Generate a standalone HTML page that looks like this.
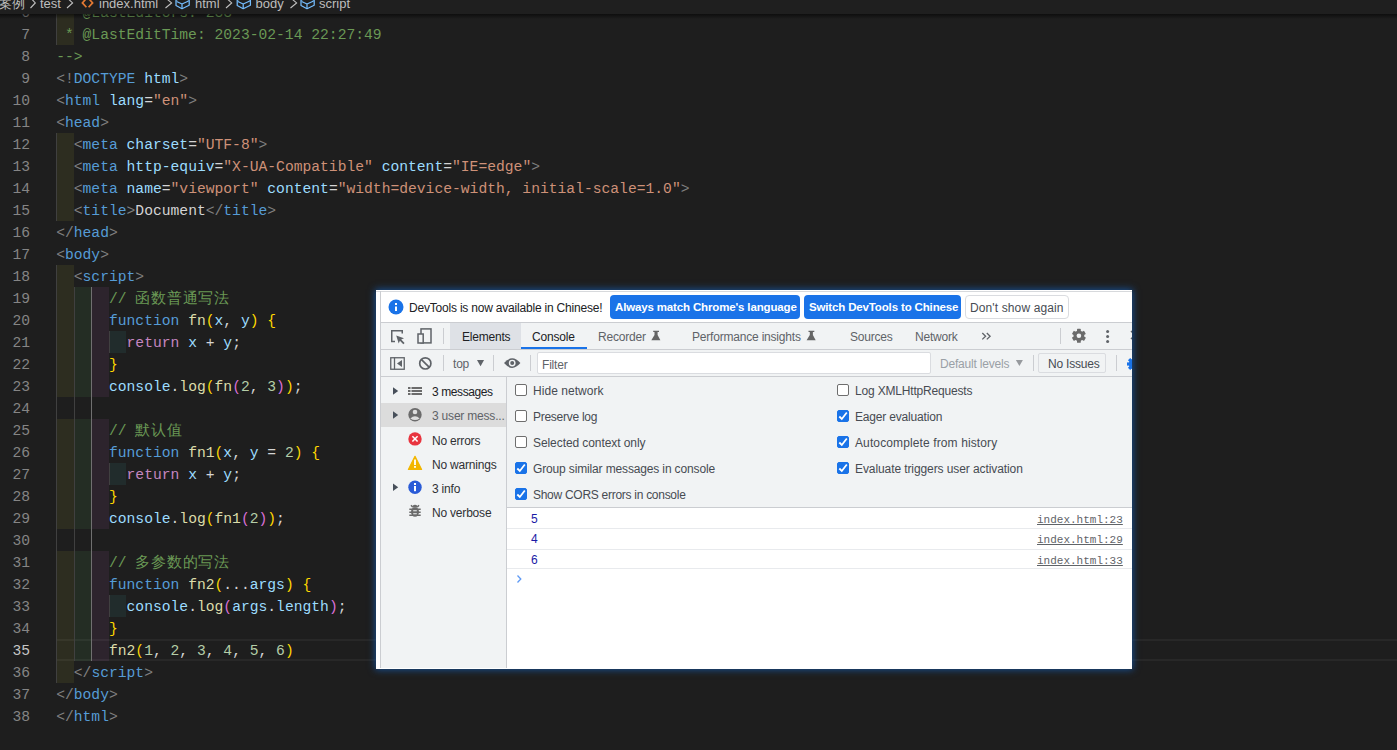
<!DOCTYPE html>
<html><head><meta charset="utf-8">
<style>
*{box-sizing:border-box;margin:0;padding:0}
html,body{width:1397px;height:750px;overflow:hidden;background:#1e1e1e}
body{position:relative;font-family:"Liberation Sans",sans-serif}
#ed{position:absolute;left:0;top:0;width:1397px;height:750px;overflow:hidden}
.cur{position:absolute;left:56px;right:0;height:22px;border-top:2px solid #282828;border-bottom:2px solid #282828}
.band{position:absolute;height:22px}
.guide{position:absolute;width:1px}
.ln{position:absolute;left:0;width:30px;text-align:right;height:22px;line-height:22px;font-family:"Liberation Mono",monospace;font-size:14.667px;color:#858585;white-space:pre}
.ln.act{color:#c6c6c6}
.code{position:absolute;left:56.2px;height:22px;line-height:22px;font-family:"Liberation Mono",monospace;font-size:14.667px;white-space:pre;color:#d4d4d4}
.cm{color:#6a9955}
.pu{color:#808080}
.tg{color:#569cd6}
.at{color:#9cdcfe}
.st{color:#ce9178}
.tx{color:#d4d4d4}
.kw{color:#569cd6}
.rt{color:#c586c0}
.va{color:#9cdcfe}
.fn{color:#dcdcaa}
.nu{color:#b5cea8}
.b1{color:#ffd700}
.b2{color:#da70d6}
#bc{position:absolute;left:0;top:0;width:1397px;height:14px;background:#1f1f1f;overflow:hidden;font-size:13px;color:#bdbdbd;white-space:nowrap}
#bc span{position:absolute;top:-4.5px;line-height:16px}
/* devtools */
#dt{position:absolute;left:376px;top:290px;width:756px;height:379px;background:#fff;overflow:hidden;box-shadow:0 0 7px 1px rgba(22,80,150,.95);font-size:12px;color:#202124;letter-spacing:-0.2px}
#dt .a{position:absolute;white-space:nowrap}
.hl{position:absolute;height:1px;background:#cbcdd1}
.vl{position:absolute;width:1px;background:#cbcdd1}
.btn{position:absolute;height:24px;border-radius:4px;background:#1a73e8;color:#fff;font-weight:bold;font-size:11.5px;letter-spacing:-0.15px;line-height:24px;padding-left:5px;white-space:nowrap}
.cb{position:absolute;width:12px;height:12px;border:1px solid #6e6e6e;border-radius:2px;background:#fff}
.cb.on{background:#1a73e8;border-color:#1a73e8}
.link{position:absolute;font-family:"Liberation Mono",monospace;font-size:11px;letter-spacing:0;color:#5f6368;text-decoration:underline;white-space:nowrap}
</style></head><body>
<div id="ed">
<div class="cur" style="top:639px"></div>
<div class="band" style="left:56.00px;top:1px;width:17.60px;background:rgba(255,255,64,0.07)"></div>
<div class="band" style="left:56.00px;top:23px;width:17.60px;background:rgba(255,255,64,0.07)"></div>
<div class="band" style="left:56.00px;top:133px;width:17.60px;background:rgba(255,255,64,0.07)"></div>
<div class="band" style="left:56.00px;top:155px;width:17.60px;background:rgba(255,255,64,0.07)"></div>
<div class="band" style="left:56.00px;top:177px;width:17.60px;background:rgba(255,255,64,0.07)"></div>
<div class="band" style="left:56.00px;top:199px;width:17.60px;background:rgba(255,255,64,0.07)"></div>
<div class="band" style="left:56.00px;top:265px;width:17.60px;background:rgba(255,255,64,0.07)"></div>
<div class="band" style="left:56.00px;top:661px;width:17.60px;background:rgba(255,255,64,0.07)"></div>
<div class="band" style="left:56.00px;top:287px;width:17.60px;background:rgba(255,255,64,0.07)"></div>
<div class="band" style="left:73.60px;top:287px;width:17.60px;background:rgba(127,255,127,0.07)"></div>
<div class="band" style="left:91.20px;top:287px;width:17.60px;background:rgba(255,127,255,0.07)"></div>
<div class="band" style="left:56.00px;top:309px;width:17.60px;background:rgba(255,255,64,0.07)"></div>
<div class="band" style="left:73.60px;top:309px;width:17.60px;background:rgba(127,255,127,0.07)"></div>
<div class="band" style="left:91.20px;top:309px;width:17.60px;background:rgba(255,127,255,0.07)"></div>
<div class="band" style="left:56.00px;top:353px;width:17.60px;background:rgba(255,255,64,0.07)"></div>
<div class="band" style="left:73.60px;top:353px;width:17.60px;background:rgba(127,255,127,0.07)"></div>
<div class="band" style="left:91.20px;top:353px;width:17.60px;background:rgba(255,127,255,0.07)"></div>
<div class="band" style="left:56.00px;top:375px;width:17.60px;background:rgba(255,255,64,0.07)"></div>
<div class="band" style="left:73.60px;top:375px;width:17.60px;background:rgba(127,255,127,0.07)"></div>
<div class="band" style="left:91.20px;top:375px;width:17.60px;background:rgba(255,127,255,0.07)"></div>
<div class="band" style="left:56.00px;top:419px;width:17.60px;background:rgba(255,255,64,0.07)"></div>
<div class="band" style="left:73.60px;top:419px;width:17.60px;background:rgba(127,255,127,0.07)"></div>
<div class="band" style="left:91.20px;top:419px;width:17.60px;background:rgba(255,127,255,0.07)"></div>
<div class="band" style="left:56.00px;top:441px;width:17.60px;background:rgba(255,255,64,0.07)"></div>
<div class="band" style="left:73.60px;top:441px;width:17.60px;background:rgba(127,255,127,0.07)"></div>
<div class="band" style="left:91.20px;top:441px;width:17.60px;background:rgba(255,127,255,0.07)"></div>
<div class="band" style="left:56.00px;top:485px;width:17.60px;background:rgba(255,255,64,0.07)"></div>
<div class="band" style="left:73.60px;top:485px;width:17.60px;background:rgba(127,255,127,0.07)"></div>
<div class="band" style="left:91.20px;top:485px;width:17.60px;background:rgba(255,127,255,0.07)"></div>
<div class="band" style="left:56.00px;top:507px;width:17.60px;background:rgba(255,255,64,0.07)"></div>
<div class="band" style="left:73.60px;top:507px;width:17.60px;background:rgba(127,255,127,0.07)"></div>
<div class="band" style="left:91.20px;top:507px;width:17.60px;background:rgba(255,127,255,0.07)"></div>
<div class="band" style="left:56.00px;top:551px;width:17.60px;background:rgba(255,255,64,0.07)"></div>
<div class="band" style="left:73.60px;top:551px;width:17.60px;background:rgba(127,255,127,0.07)"></div>
<div class="band" style="left:91.20px;top:551px;width:17.60px;background:rgba(255,127,255,0.07)"></div>
<div class="band" style="left:56.00px;top:573px;width:17.60px;background:rgba(255,255,64,0.07)"></div>
<div class="band" style="left:73.60px;top:573px;width:17.60px;background:rgba(127,255,127,0.07)"></div>
<div class="band" style="left:91.20px;top:573px;width:17.60px;background:rgba(255,127,255,0.07)"></div>
<div class="band" style="left:56.00px;top:617px;width:17.60px;background:rgba(255,255,64,0.07)"></div>
<div class="band" style="left:73.60px;top:617px;width:17.60px;background:rgba(127,255,127,0.07)"></div>
<div class="band" style="left:91.20px;top:617px;width:17.60px;background:rgba(255,127,255,0.07)"></div>
<div class="band" style="left:56.00px;top:639px;width:17.60px;background:rgba(255,255,64,0.07)"></div>
<div class="band" style="left:73.60px;top:639px;width:17.60px;background:rgba(127,255,127,0.07)"></div>
<div class="band" style="left:91.20px;top:639px;width:17.60px;background:rgba(255,127,255,0.07)"></div>
<div class="band" style="left:56.00px;top:331px;width:17.60px;background:rgba(255,255,64,0.07)"></div>
<div class="band" style="left:73.60px;top:331px;width:17.60px;background:rgba(127,255,127,0.07)"></div>
<div class="band" style="left:91.20px;top:331px;width:17.60px;background:rgba(255,127,255,0.07)"></div>
<div class="band" style="left:108.80px;top:331px;width:17.60px;background:rgba(79,236,236,0.07)"></div>
<div class="band" style="left:56.00px;top:463px;width:17.60px;background:rgba(255,255,64,0.07)"></div>
<div class="band" style="left:73.60px;top:463px;width:17.60px;background:rgba(127,255,127,0.07)"></div>
<div class="band" style="left:91.20px;top:463px;width:17.60px;background:rgba(255,127,255,0.07)"></div>
<div class="band" style="left:108.80px;top:463px;width:17.60px;background:rgba(79,236,236,0.07)"></div>
<div class="band" style="left:56.00px;top:595px;width:17.60px;background:rgba(255,255,64,0.07)"></div>
<div class="band" style="left:73.60px;top:595px;width:17.60px;background:rgba(127,255,127,0.07)"></div>
<div class="band" style="left:91.20px;top:595px;width:17.60px;background:rgba(255,127,255,0.07)"></div>
<div class="band" style="left:108.80px;top:595px;width:17.60px;background:rgba(79,236,236,0.07)"></div>
<div class="guide" style="left:56px;top:1px;height:44px;background:#404040"></div>
<div class="guide" style="left:56px;top:133px;height:88px;background:#404040"></div>
<div class="guide" style="left:56px;top:265px;height:418px;background:#404040"></div>
<div class="guide" style="left:74px;top:287px;height:374px;background:#404040"></div>
<div class="guide" style="left:91px;top:287px;height:374px;background:#707070"></div>
<div class="guide" style="left:109px;top:331px;height:22px;background:#404040"></div>
<div class="guide" style="left:109px;top:463px;height:22px;background:#404040"></div>
<div class="guide" style="left:109px;top:595px;height:22px;background:#404040"></div>
<div class="ln" style="top:2px">6</div>
<div class="code" style="top:2px"><span class="cm"> * @LastEditors: 233</span></div>
<div class="ln" style="top:24px">7</div>
<div class="code" style="top:24px"><span class="cm"> * @LastEditTime: 2023-02-14 22:27:49</span></div>
<div class="ln" style="top:46px">8</div>
<div class="code" style="top:46px"><span class="cm">--&gt;</span></div>
<div class="ln" style="top:68px">9</div>
<div class="code" style="top:68px"><span class="pu">&lt;!</span><span class="tg">DOCTYPE</span><span class="tx"> </span><span class="at">html</span><span class="pu">&gt;</span></div>
<div class="ln" style="top:90px">10</div>
<div class="code" style="top:90px"><span class="pu">&lt;</span><span class="tg">html</span><span class="tx"> </span><span class="at">lang</span><span class="tx">=</span><span class="st">&quot;en&quot;</span><span class="pu">&gt;</span></div>
<div class="ln" style="top:112px">11</div>
<div class="code" style="top:112px"><span class="pu">&lt;</span><span class="tg">head</span><span class="pu">&gt;</span></div>
<div class="ln" style="top:134px">12</div>
<div class="code" style="top:134px"><span class="tx">  </span><span class="pu">&lt;</span><span class="tg">meta</span><span class="tx"> </span><span class="at">charset</span><span class="tx">=</span><span class="st">&quot;UTF-8&quot;</span><span class="pu">&gt;</span></div>
<div class="ln" style="top:156px">13</div>
<div class="code" style="top:156px"><span class="tx">  </span><span class="pu">&lt;</span><span class="tg">meta</span><span class="tx"> </span><span class="at">http-equiv</span><span class="tx">=</span><span class="st">&quot;X-UA-Compatible&quot;</span><span class="tx"> </span><span class="at">content</span><span class="tx">=</span><span class="st">&quot;IE=edge&quot;</span><span class="pu">&gt;</span></div>
<div class="ln" style="top:178px">14</div>
<div class="code" style="top:178px"><span class="tx">  </span><span class="pu">&lt;</span><span class="tg">meta</span><span class="tx"> </span><span class="at">name</span><span class="tx">=</span><span class="st">&quot;viewport&quot;</span><span class="tx"> </span><span class="at">content</span><span class="tx">=</span><span class="st">&quot;width=device-width, initial-scale=1.0&quot;</span><span class="pu">&gt;</span></div>
<div class="ln" style="top:200px">15</div>
<div class="code" style="top:200px"><span class="tx">  </span><span class="pu">&lt;</span><span class="tg">title</span><span class="pu">&gt;</span><span class="tx">Document</span><span class="pu">&lt;/</span><span class="tg">title</span><span class="pu">&gt;</span></div>
<div class="ln" style="top:222px">16</div>
<div class="code" style="top:222px"><span class="pu">&lt;/</span><span class="tg">head</span><span class="pu">&gt;</span></div>
<div class="ln" style="top:244px">17</div>
<div class="code" style="top:244px"><span class="pu">&lt;</span><span class="tg">body</span><span class="pu">&gt;</span></div>
<div class="ln" style="top:266px">18</div>
<div class="code" style="top:266px"><span class="tx">  </span><span class="pu">&lt;</span><span class="tg">script</span><span class="pu">&gt;</span></div>
<div class="ln" style="top:288px">19</div>
<div class="code" style="top:288px"><span class="tx">      </span><span class="cm">// <span style="letter-spacing:0.75px">函数普通写法</span></span></div>
<div class="ln" style="top:310px">20</div>
<div class="code" style="top:310px"><span class="tx">      </span><span class="kw">function</span><span class="tx"> </span><span class="fn">fn</span><span class="b1">(</span><span class="va">x</span><span class="tx">, </span><span class="va">y</span><span class="b1">)</span><span class="tx"> </span><span class="b1">{</span></div>
<div class="ln" style="top:332px">21</div>
<div class="code" style="top:332px"><span class="tx">        </span><span class="rt">return</span><span class="tx"> </span><span class="va">x</span><span class="tx"> + </span><span class="va">y</span><span class="tx">;</span></div>
<div class="ln" style="top:354px">22</div>
<div class="code" style="top:354px"><span class="tx">      </span><span class="b1">}</span></div>
<div class="ln" style="top:376px">23</div>
<div class="code" style="top:376px"><span class="tx">      </span><span class="va">console</span><span class="tx">.</span><span class="fn">log</span><span class="b1">(</span><span class="fn">fn</span><span class="b2">(</span><span class="nu">2</span><span class="tx">, </span><span class="nu">3</span><span class="b2">)</span><span class="b1">)</span><span class="tx">;</span></div>
<div class="ln" style="top:398px">24</div>
<div class="code" style="top:398px"></div>
<div class="ln" style="top:420px">25</div>
<div class="code" style="top:420px"><span class="tx">      </span><span class="cm">// <span style="letter-spacing:0.75px">默认值</span></span></div>
<div class="ln" style="top:442px">26</div>
<div class="code" style="top:442px"><span class="tx">      </span><span class="kw">function</span><span class="tx"> </span><span class="fn">fn1</span><span class="b1">(</span><span class="va">x</span><span class="tx">, </span><span class="va">y</span><span class="tx"> = </span><span class="nu">2</span><span class="b1">)</span><span class="tx"> </span><span class="b1">{</span></div>
<div class="ln" style="top:464px">27</div>
<div class="code" style="top:464px"><span class="tx">        </span><span class="rt">return</span><span class="tx"> </span><span class="va">x</span><span class="tx"> + </span><span class="va">y</span><span class="tx">;</span></div>
<div class="ln" style="top:486px">28</div>
<div class="code" style="top:486px"><span class="tx">      </span><span class="b1">}</span></div>
<div class="ln" style="top:508px">29</div>
<div class="code" style="top:508px"><span class="tx">      </span><span class="va">console</span><span class="tx">.</span><span class="fn">log</span><span class="b1">(</span><span class="fn">fn1</span><span class="b2">(</span><span class="nu">2</span><span class="b2">)</span><span class="b1">)</span><span class="tx">;</span></div>
<div class="ln" style="top:530px">30</div>
<div class="code" style="top:530px"></div>
<div class="ln" style="top:552px">31</div>
<div class="code" style="top:552px"><span class="tx">      </span><span class="cm">// <span style="letter-spacing:0.75px">多参数的写法</span></span></div>
<div class="ln" style="top:574px">32</div>
<div class="code" style="top:574px"><span class="tx">      </span><span class="kw">function</span><span class="tx"> </span><span class="fn">fn2</span><span class="b1">(</span><span class="tx">...</span><span class="va">args</span><span class="b1">)</span><span class="tx"> </span><span class="b1">{</span></div>
<div class="ln" style="top:596px">33</div>
<div class="code" style="top:596px"><span class="tx">        </span><span class="va">console</span><span class="tx">.</span><span class="fn">log</span><span class="b2">(</span><span class="va">args</span><span class="tx">.</span><span class="va">length</span><span class="b2">)</span><span class="tx">;</span></div>
<div class="ln" style="top:618px">34</div>
<div class="code" style="top:618px"><span class="tx">      </span><span class="b1">}</span></div>
<div class="ln act" style="top:640px">35</div>
<div class="code" style="top:640px"><span class="tx">      </span><span class="fn">fn2</span><span class="b1">(</span><span class="nu">1</span><span class="tx">, </span><span class="nu">2</span><span class="tx">, </span><span class="nu">3</span><span class="tx">, </span><span class="nu">4</span><span class="tx">, </span><span class="nu">5</span><span class="tx">, </span><span class="nu">6</span><span class="b1">)</span></div>
<div class="ln" style="top:662px">36</div>
<div class="code" style="top:662px"><span class="tx">  </span><span class="pu">&lt;/</span><span class="tg">script</span><span class="pu">&gt;</span></div>
<div class="ln" style="top:684px">37</div>
<div class="code" style="top:684px"><span class="pu">&lt;/</span><span class="tg">body</span><span class="pu">&gt;</span></div>
<div class="ln" style="top:706px">38</div>
<div class="code" style="top:706px"><span class="pu">&lt;/</span><span class="tg">html</span><span class="pu">&gt;</span></div>
</div>
<div id="bc">
  <span style="left:-1px">案例</span>
  <span style="left:40px">test</span>
  <span style="left:99px">index.html</span>
  <span style="left:195px">html</span>
  <span style="left:255.5px">body</span>
  <span style="left:319px">script</span>
  <svg style="position:absolute;left:0;top:0" width="400" height="14" viewBox="0 0 400 14">
    <g fill="none" stroke="#c0c0c0" stroke-width="1.1">
      <path d="M30.5 -2.2L35.3 2.9L30.5 8M67 -2.2L72.6 2.9L67 8M165.5 -2.2L171.6 2.9L165.5 8M226 -2.2L231.7 2.9L226 8M290.5 -2.2L296.6 2.9L290.5 8"/>
    </g>
    <path d="M86.4 -1.6L82.4 2.9L86.4 7.3M88.6 -1.6L92.6 2.9L88.6 7.3" fill="none" stroke="#e37933" stroke-width="1.7"/>
    <g fill="none" stroke="#75beff" stroke-width="1.25" stroke-linejoin="round">
      <path d="M176 0.3L182.5 -3L189.2 0.3V5.2L182 8.7L176 5.5Z"/>
      <path d="M176.6 1.5L182 4L188.6 1M182 4V8.4"/>
    </g>
    <g fill="none" stroke="#75beff" stroke-width="1.25" stroke-linejoin="round" transform="translate(61.2 0)">
      <path d="M176 0.3L182.5 -3L189.2 0.3V5.2L182 8.7L176 5.5Z"/>
      <path d="M176.6 1.5L182 4L188.6 1M182 4V8.4"/>
    </g>
    <g fill="none" stroke="#75beff" stroke-width="1.25" stroke-linejoin="round" transform="translate(125 0)">
      <path d="M176 0.3L182.5 -3L189.2 0.3V5.2L182 8.7L176 5.5Z"/>
      <path d="M176.6 1.5L182 4L188.6 1M182 4V8.4"/>
    </g>
  </svg>
</div>
<div style="position:absolute;left:0;top:14px;width:1397px;height:5px;background:linear-gradient(rgba(0,0,0,.55),rgba(0,0,0,0))"></div>
<div id="dt">
  <!-- borders -->
  <div class="hl" style="left:0;top:1px;width:756px;background:#d7d9dc"></div>
  <div class="vl" style="left:4px;top:1px;height:378px"></div>
  <!-- infobar -->
    <div class="a" style="left:33px;top:10px;line-height:16px">DevTools is now available in Chinese!</div>
  <div class="btn" style="left:234px;top:5px;width:190px">Always match Chrome's language</div>
  <div class="btn" style="left:428px;top:5px;width:157px">Switch DevTools to Chinese</div>
  <div class="a" style="left:589px;top:5px;width:104px;height:24px;border:1px solid #dadce0;border-radius:4px;line-height:24px;padding-left:4px;letter-spacing:0.12px;color:#474c53">Don't show again</div>
  <div class="hl" style="left:4px;top:32px;width:752px"></div>
  <!-- tab bar -->
  <div class="a" style="left:5px;top:33px;width:751px;height:26px;background:#f1f3f4"></div>
  <div class="a" style="left:74px;top:33px;width:71px;height:26px;background:#dee1e6"></div>
  <div class="a" style="left:86px;top:39px;line-height:16px">Elements</div>
  <div class="a" style="left:156px;top:39px;line-height:16px">Console</div>
  <div class="a" style="left:145px;top:57px;width:66px;height:2px;background:#1a73e8"></div>
  <div class="a" style="left:222px;top:39px;line-height:16px;color:#5f6368">Recorder</div>
  <div class="a" style="left:316px;top:39px;line-height:16px;color:#5f6368">Performance insights</div>
  <div class="a" style="left:474px;top:39px;line-height:16px;color:#5f6368">Sources</div>
  <div class="a" style="left:539px;top:39px;line-height:16px;color:#5f6368">Network</div>
    <div class="hl" style="left:4px;top:59px;width:752px"></div>
  <!-- toolbar -->
  <div class="a" style="left:5px;top:60px;width:751px;height:26px;background:#f1f3f4"></div>
  <div class="a" style="left:77px;top:66px;line-height:16px;color:#5f6368">top</div>
  <div class="a" style="left:161px;top:62px;width:394px;height:22px;background:#fff;border:1px solid #dadce0;border-radius:2px"></div>
  <div class="a" style="left:166px;top:67px;line-height:16px;color:#5f6368">Filter</div>
  <div class="a" style="left:564px;top:66px;line-height:16px;color:#9aa0a6">Default levels</div>
  <div class="a" style="left:662px;top:63px;width:68px;height:20px;border:1px solid #dadce0;border-radius:2px;line-height:20px;padding-left:9px;color:#474b52">No Issues</div>
  <div class="hl" style="left:4px;top:86px;width:752px"></div>
  <!-- body -->
  <div class="a" style="left:5px;top:87px;width:125px;height:292px;background:#f1f3f4"></div>
  <div class="a" style="left:5px;top:113px;width:125px;height:24px;background:#dcdcdc"></div>
  <div class="vl" style="left:130px;top:87px;height:292px"></div>
  <div class="a" style="left:56px;top:94px;line-height:16px;letter-spacing:-0.400px">3 messages</div>
  <div class="a" style="left:56px;top:118px;line-height:16px;color:#5f6368">3 user mess...</div>
  <div class="a" style="left:56px;top:143px;line-height:16px;color:#303134">No errors</div>
  <div class="a" style="left:56px;top:167px;line-height:16px;color:#303134">No warnings</div>
  <div class="a" style="left:56px;top:191px;line-height:16px;color:#303134">3 info</div>
  <div class="a" style="left:56px;top:215px;line-height:16px;color:#303134">No verbose</div>
  <!-- settings -->
  <div class="a" style="left:131px;top:87px;width:625px;height:130px;background:#f1f3f4"></div>
  <div class="hl" style="left:131px;top:217px;width:625px"></div>
  <div class="cb" style="left:139px;top:94px"></div><div class="a" style="left:157px;top:93px;line-height:16px;letter-spacing:0.050px;color:#474b52">Hide network</div>
  <div class="cb" style="left:139px;top:120px"></div><div class="a" style="left:157px;top:119px;line-height:16px;letter-spacing:-0.267px;color:#474b52">Preserve log</div>
  <div class="cb" style="left:139px;top:146px"></div><div class="a" style="left:157px;top:145px;line-height:16px;letter-spacing:-0.076px;color:#474b52">Selected context only</div>
  <div class="cb on" style="left:139px;top:172px"></div><div class="a" style="left:157px;top:171px;line-height:16px;letter-spacing:-0.145px;color:#474b52">Group similar messages in console</div>
  <div class="cb on" style="left:139px;top:198px"></div><div class="a" style="left:157px;top:197px;line-height:16px;letter-spacing:-0.278px;color:#474b52">Show CORS errors in console</div>
  <div class="cb" style="left:461px;top:94px"></div><div class="a" style="left:479px;top:93px;line-height:16px;letter-spacing:-0.179px;color:#474b52">Log XMLHttpRequests</div>
  <div class="cb on" style="left:461px;top:120px"></div><div class="a" style="left:479px;top:119px;line-height:16px;letter-spacing:-0.181px;color:#474b52">Eager evaluation</div>
  <div class="cb on" style="left:461px;top:146px"></div><div class="a" style="left:479px;top:145px;line-height:16px;letter-spacing:0.116px;color:#474b52">Autocomplete from history</div>
  <div class="cb on" style="left:461px;top:172px"></div><div class="a" style="left:479px;top:171px;line-height:16px;letter-spacing:-0.091px;color:#474b52">Evaluate triggers user activation</div>
  <!-- messages -->
  <div class="a" style="left:155px;top:221px;line-height:16px;color:#1a1aa6">5</div>
  <div class="link" style="left:661px;top:223px;line-height:14px">index.html:23</div>
  <div class="hl" style="left:131px;top:238px;width:625px;background:#e8eaed"></div>
  <div class="a" style="left:155px;top:241px;line-height:16px;color:#1a1aa6">4</div>
  <div class="link" style="left:661px;top:243px;line-height:14px">index.html:29</div>
  <div class="hl" style="left:131px;top:259px;width:625px;background:#e8eaed"></div>
  <div class="a" style="left:155px;top:262px;line-height:16px;color:#1a1aa6">6</div>
  <div class="link" style="left:661px;top:264px;line-height:14px">index.html:33</div>
  <div class="hl" style="left:131px;top:278px;width:625px;background:#e8eaed"></div>
    <div class="a" style="left:0;top:378px;width:756px;height:1px;background:#fff"></div>
<svg style="position:absolute;left:-376px;top:-290px" width="1397" height="750" viewBox="0 0 1397 750">
  <g fill="none" stroke="#cbcdd1" stroke-width="1">
    <path d="M443.5 328V344M1060.5 328V344M443.5 355V371M493.5 355V371M530.5 355V371M1033.5 355V371M1116.5 355V371"/>
  </g>
  <!-- infobar info -->
  <circle cx="396" cy="307" r="7.5" fill="#1a73e8"/>
  <rect x="395" y="303" width="2" height="2" fill="#fff"/><rect x="395" y="306.5" width="2" height="4.5" fill="#fff"/>
  <g fill="none" stroke="#5f6368" stroke-width="1.5">
    <!-- inspect -->
    <path d="M395 341.5H391.75V330.75H402.25V333.5"/>
    <!-- device -->
    <rect x="421" y="328.9" width="10" height="14" />
    <rect x="418" y="334" width="5.2" height="9" fill="#f1f3f4"/>
    <!-- sidebar toggle -->
    <rect x="390.75" y="357.75" width="13.5" height="11.5" stroke-width="1.3"/>
    <path d="M394.5 357.5V369.5" stroke-width="1.3"/>
    <!-- block -->
    <circle cx="425.3" cy="363.4" r="5.6" stroke-width="1.7"/>
    <path d="M421.5 359.6L429.1 367.2" stroke-width="1.7"/>
    <!-- chevrons -->
    <path d="M982.3 333L985.6 336.2L982.3 339.4M986.8 333L990.1 336.2L986.8 339.4" stroke-width="1.3"/>
    <!-- close -->
    <path d="M1131 331L1139 339M1139 331L1131 339" stroke-width="1.5"/>
  </g>
  <g fill="#5f6368">
    <path d="M396.2 335.4L404 338.3L401.2 339.5L404.6 342.9L403.3 344.2L399.9 340.8L398.7 343.5Z"/>
    <path d="M397 363.5L402 360V367Z"/>
    <path d="M477 360.1H484.1L480.55 366.3Z"/>
    <path d="M1015.9 360H1022.9L1019.4 366.1Z" fill="#979a9e"/>
    <path d="M504 363.1Q512.2 353.5 520.4 363.1Q512.2 372.7 504 363.1Z"/>
    <circle cx="512.2" cy="363.1" r="3.4" fill="#f1f3f4"/>
    <circle cx="512.2" cy="363.1" r="2"/>
    <!-- kebab -->
    <circle cx="1107.6" cy="331.4" r="1.5"/><circle cx="1107.6" cy="336.4" r="1.5"/><circle cx="1107.6" cy="341.4" r="1.5"/>
    <!-- gear -->
    <g transform="translate(1078.9 335.8)">
      <circle r="5.4" fill="#6b6b6b"/>
      <g fill="#6b6b6b"><rect x="-1.9" y="-7" width="3.8" height="14" rx="0.6"/><rect x="-1.9" y="-7" width="3.8" height="14" rx="0.6" transform="rotate(60)"/><rect x="-1.9" y="-7" width="3.8" height="14" rx="0.6" transform="rotate(120)"/></g>
      <circle r="2.3" fill="#f1f3f4"/>
    </g>
  </g>
  <g fill="#666">
    <path d="M653.2 330.8H659V332H657.6V335L660.4 340.2H651.3L654.5 335V332H653.2Z"/>
    <path d="M808.5 330.8H814.3V332H812.9V335L815.7 340.2H806.6L809.8 335V332H808.5Z"/>
  </g>
  <!-- blue settings icon (clipped) -->
  <g fill="#1a73e8" transform="translate(1134 364)">
    <circle r="5.2"/>
    <rect x="-1.6" y="-7" width="3.2" height="14"/><rect x="-1.6" y="-7" width="3.2" height="14" transform="rotate(45)"/><rect x="-1.6" y="-7" width="3.2" height="14" transform="rotate(90)"/><rect x="-1.6" y="-7" width="3.2" height="14" transform="rotate(135)"/>
  </g>
  <!-- sidebar -->
  <g fill="#474f5a">
    <path d="M393 387.3L398.2 391L393 394.7Z"/>
    <path d="M393 411.3L398.2 415L393 418.7Z"/>
    <path d="M393 483.6L398.2 487.3L393 491Z"/>
  </g>
  <g fill="#6b6b6b">
    <rect x="408" y="387" width="2.5" height="2"/><rect x="411.5" y="387" width="10.5" height="2"/>
    <rect x="408" y="390" width="2.5" height="2"/><rect x="411.5" y="390" width="10.5" height="2"/>
    <rect x="408" y="393" width="2.5" height="2"/><rect x="411.5" y="393" width="10.5" height="2"/>
  </g>
  <circle cx="415" cy="414.7" r="6.7" fill="#6b6b6b"/>
  <circle cx="415" cy="412" r="2.3" fill="#dcdcdc"/>
  <path d="M410.3 418.5Q415 413.8 419.7 418.5Q415 421.5 410.3 418.5Z" fill="#dcdcdc"/>
  <circle cx="415" cy="438.9" r="6.7" fill="#e8343f"/>
  <path d="M412.4 436.3L417.6 441.5M417.6 436.3L412.4 441.5" stroke="#fff" stroke-width="1.6"/>
  <path d="M415 456.3L421.6 469.4H408.4Z" fill="#f2b600" stroke="#f2b600" stroke-width="1.2" stroke-linejoin="round"/>
  <rect x="414.1" y="459.5" width="1.8" height="5.5" fill="#fff"/><rect x="414.1" y="466" width="1.8" height="1.8" fill="#fff"/>
  <circle cx="415" cy="487.3" r="6.7" fill="#2a5bd7"/>
  <rect x="414" y="483" width="2" height="2" fill="#fff"/><rect x="414" y="486" width="2" height="5.2" fill="#fff"/>
  <g fill="#6b6b6b">
    <path d="M412.3 507.5A2.7 2.7 0 0 1 417.7 507.5Z"/>
    <ellipse cx="415" cy="512" rx="4" ry="4.8"/>
  </g>
  <g stroke="#6b6b6b" stroke-width="1.5">
    <path d="M409.3 509.3H420.7M409.3 512.3H420.7M409.3 515.3H420.7M411 505.2L412.6 507M419 505.2L417.4 507"/>
  </g>
  <path d="M413.2 510.7H416.8M413.2 513.7H416.8" stroke="#f1f3f4" stroke-width="1.1"/>
  <!-- prompt -->
  <path d="M517.5 575.5L520.8 579L517.5 582.5" fill="none" stroke="#5f9af5" stroke-width="1.3"/>
  <g fill="none" stroke="#fff" stroke-width="1.8">
    <path d="M517.3 468.5L519.8 471L524.8 464.5M517.3 494.5L519.8 497L524.8 490.5M839.3 416.5L841.8 419L846.8 412.5M839.3 442.5L841.8 445L846.8 438.5M839.3 468.5L841.8 471L846.8 464.5"/>
  </g>
</svg>
</div>
</body></html>
